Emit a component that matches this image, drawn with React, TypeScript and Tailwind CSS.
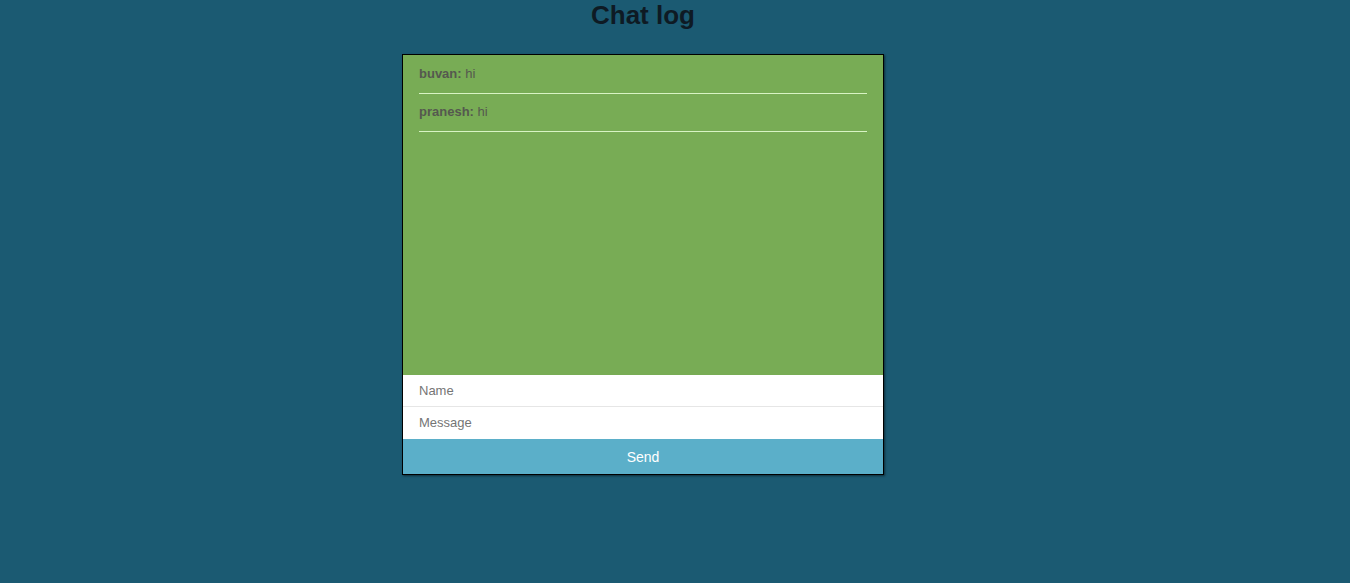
export default function App() {
  const messages = [
    { name: "buvan", text: "hi" },
    { name: "pranesh", text: "hi" },
  ];

  return (
    <div className="min-h-[583px] bg-[#1b5a72] font-['Liberation_Sans',Arial,sans-serif]">
      <div className="w-[1286px]">
        <h1 className="text-center text-[26px] font-bold leading-[31px] text-[#0e1a24]">Chat log</h1>
        <div className="mx-auto mt-[23px] w-[482px] border border-black shadow-[1px_1px_2px_rgba(0,0,0,0.5)]">
          <ul className="h-[320px] bg-[#78ac55] px-4 pt-px">
            {messages.map((m) => (
              <li
                key={m.name}
                className="border-b border-[#d8f3c4] pt-[8px] pb-[10px] text-[13px] leading-[19px] text-[#55584f]"
              >
                <span className="font-bold">{m.name}:</span> {m.text}
              </li>
            ))}
          </ul>
          <input
            placeholder="Name"
            className="block h-8 w-full border-b border-[#e6e6e6] bg-white px-4 text-[13px] text-[#333] outline-none placeholder:text-[#757575]"
          />
          <input
            placeholder="Message"
            className="block h-8 w-full bg-white px-4 pb-px text-[13px] text-[#333] outline-none placeholder:text-[#757575]"
          />
          <button
            type="button"
            className="block h-[35px] w-full bg-[#5bafc9] text-sm text-white"
          >
            Send
          </button>
        </div>
      </div>
    </div>
  );
}
